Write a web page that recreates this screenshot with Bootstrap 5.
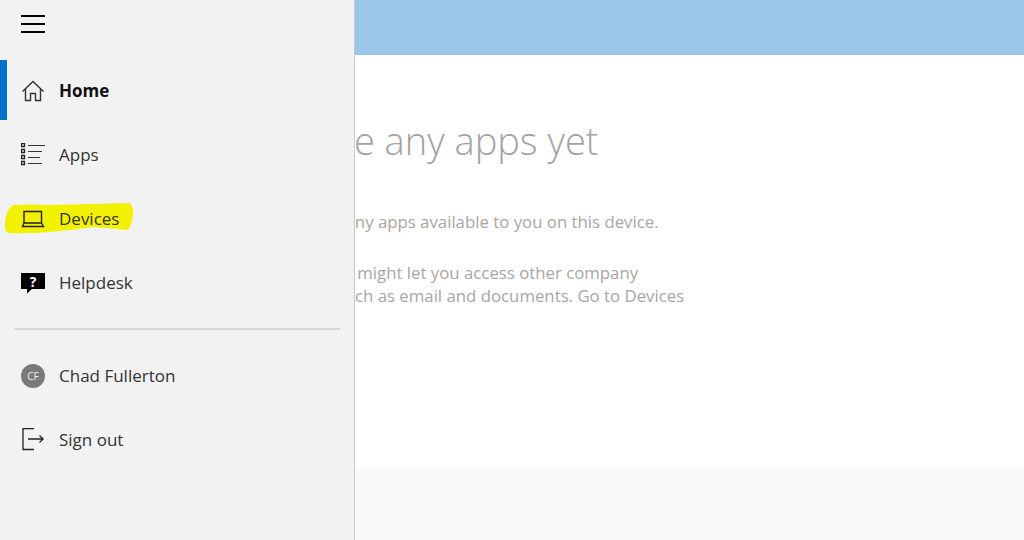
<!DOCTYPE html>
<html lang="en">
<head>
<meta charset="utf-8">
<title>Company Portal</title>
<link href="https://cdn.jsdelivr.net/npm/bootstrap@5.3.0/dist/css/bootstrap.min.css" rel="stylesheet">
<style>
html,body{height:540px;overflow:hidden}
body{font-family:"Open Sans","Noto Sans",sans-serif;background:#fff;position:relative}
.page-band{height:55px;background:#9ac6e8}
.page-body{height:414px;background:#fff;padding:60px 0 0 122px;color:#a9a5a5;white-space:nowrap}
.page-foot{height:71px;background:#f9f9f9}
.empty-title{font-weight:300;font-size:38px;line-height:50px;margin:0 0 45px;color:#a4a2a2}
.empty-text{font-size:16.800px;line-height:23px;margin:0 0 28px 124px}
.empty-text .line-a{display:block;margin-left:-6px}
.empty-text .line-b{display:block;margin-left:5px}
.side-panel{position:absolute;left:0;top:0;bottom:0;width:355px;background:#f2f2f2;border-right:1px solid #c8c8c8}
.burger{height:48px;padding-left:21px;background:none;border:0;display:flex;flex-direction:column;justify-content:center;gap:6px}
.burger span{display:block;width:24px;height:2px;background:#000}
.side-nav{margin-top:11px}
.side-item{height:64px;display:flex;align-items:center;gap:14px;padding-left:21px;font-size:17px;color:#333;text-decoration:none;position:relative}
.side-item svg.ico{flex:none;width:24px;height:24px;position:relative}
.side-item span.lbl{position:relative}
.side-item.is-active{font-weight:700;color:#111}
.side-item.is-active::before{content:"";position:absolute;left:0;top:1px;bottom:3px;width:7px;background:#0072c6}
.hl{position:absolute;left:4px;top:14px;width:130px;height:38px}
.side-rule{margin:13px 14px 14px 14px;border:0;border-top:2px solid #d8d8d8;opacity:1}
.avatar{flex:none;width:24px;height:24px;border-radius:50%;background:#7a7a7a;color:#f0f0f0;font-size:10px;display:flex;align-items:center;justify-content:center}
</style>
</head>
<body>
<main>
  <div class="page-band"></div>
  <div class="page-body">
    <h1 class="empty-title">You don't have any apps yet</h1>
    <p class="empty-text">There aren't any apps available to you on this device.</p>
    <p class="empty-text"><span class="line-a">Your company might let you access other company</span><span class="line-b">resources, such as email and documents. Go to Devices</span></p>
  </div>
  <div class="page-foot"></div>
</main>
<aside class="side-panel">
  <button class="burger" type="button" aria-label="Menu"><span></span><span></span><span></span></button>
  <nav class="nav flex-column side-nav">
    <a class="side-item is-active" href="#">
      <svg class="ico" viewBox="0 0 24 24" fill="none" stroke="#333" stroke-width="1.400"><path d="M1.500 12.500 12 2.500l10.500 10M4.500 10v11.500h5V14.500h5v7h5V10"/></svg>
      <span class="lbl">Home</span>
    </a>
    <a class="side-item" href="#">
      <svg class="ico" viewBox="0 0 24 24" fill="none" stroke="#333"><path d="M.5.500h3v3h-3zM.5 6.500h3v3h-3zM.5 12.500h3v3h-3zM.5 18.500h3v3h-3z" stroke="#222" stroke-width="1.300"/><path d="M7 2.500h17M7 8.500h14M7 14.500h12M7 20.500h14"/></svg>
      <span class="lbl">Apps</span>
    </a>
    <a class="side-item" href="#">
      <svg class="hl" viewBox="0 0 130 38" aria-hidden="true"><path fill="#f2f200" d="M9 4Q28 3 46 4Q90 3 126 2Q130 7 129 12Q129 22 124 29Q105 27 89 26Q68 29 46 31Q25 33 6 32Q1 32 1 26Q1 17 3 12Q5 7 9 4Z"/></svg>
      <svg class="ico" viewBox="0 0 24 24" fill="none" stroke="#222" stroke-width="1.400"><path d="M3 4.500h17.500v11.500H3zM3 16 1.500 19.500h21L20.500 16"/></svg>
      <span class="lbl">Devices</span>
    </a>
    <a class="side-item" href="#">
      <svg class="ico" viewBox="0 0 24 24"><path fill="#000" d="M0 2h24v16H11l-5 4.500V18H0z"/><text x="12" y="15.500" font-size="14" font-weight="700" fill="#fff" text-anchor="middle" font-family="Open Sans,sans-serif">?</text></svg>
      <span class="lbl">Helpdesk</span>
    </a>
    <hr class="side-rule">
    <a class="side-item" href="#">
      <span class="avatar">CF</span>
      <span class="lbl">Chad Fullerton</span>
    </a>
    <a class="side-item" href="#">
      <svg class="ico" viewBox="0 0 24 24" fill="none" stroke="#222" stroke-width="1.300"><path d="M13 .5H2v21h11M7 11h15M18.500 7.500 22 11l-3.500 3.500"/></svg>
      <span class="lbl">Sign out</span>
    </a>
  </nav>
</aside>
<script src="https://cdn.jsdelivr.net/npm/bootstrap@5.3.0/dist/js/bootstrap.bundle.min.js"></script>
</body>
</html>
